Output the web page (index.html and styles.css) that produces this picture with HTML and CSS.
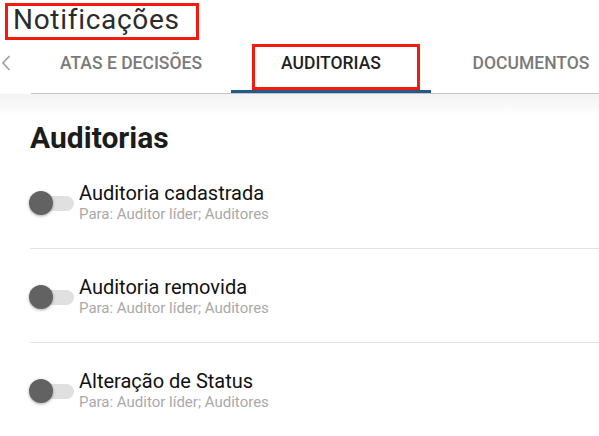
FILE: index.html
```html
<!DOCTYPE html>
<html lang="pt">
<head>
<meta charset="utf-8">
<link rel="stylesheet" href="styles.css">
</head>
<body>
<header class="header">
  <h1 class="title">Notificações</h1>
  <div class="mark mark-title"></div>
</header>
<nav class="tabs">
  <button class="tab-scroll" aria-label="Anterior">
    <svg width="10" height="16" viewBox="0 0 10 16"><path d="M8.5 1 L2 8 L8.5 15" fill="none" stroke="#9e9e9e" stroke-width="1.6"/></svg>
  </button>
  <div class="tab-list">
    <div class="tab">ATAS E DECISÕES</div>
    <div class="tab active">AUDITORIAS</div>
    <div class="tab">DOCUMENTOS</div>
  </div>
  <div class="mark mark-tab"></div>
</nav>
<main class="content">
  <h2 class="section-title">Auditorias</h2>
  <ul class="list">
    <li class="item">
      <span class="toggle"><span class="track"></span><span class="thumb"></span></span>
      <div class="item-text">
        <div class="item-title">Auditoria cadastrada</div>
        <div class="item-sub">Para: Auditor líder; Auditores</div>
      </div>
    </li>
    <li class="item">
      <span class="toggle"><span class="track"></span><span class="thumb"></span></span>
      <div class="item-text">
        <div class="item-title">Auditoria removida</div>
        <div class="item-sub">Para: Auditor líder; Auditores</div>
      </div>
    </li>
    <li class="item">
      <span class="toggle"><span class="track"></span><span class="thumb"></span></span>
      <div class="item-text">
        <div class="item-title">Alteração de Status</div>
        <div class="item-sub">Para: Auditor líder; Auditores</div>
      </div>
    </li>
  </ul>
</main>
</body>
</html>
```

FILE: styles.css
```css
* { box-sizing: border-box; }
html, body { margin: 0; padding: 0; background: #fff; }
body {
  font-family: Roboto, "Noto Sans", Arial, sans-serif;
  color: #212121;
  width: 599px;
  height: 436px;
  overflow: hidden;
}
.header {
  position: relative;
  height: 40px;
  padding: 3px 0 0 13px;
}
.title {
  margin: 0;
  font-size: 28px;
  letter-spacing: 0.7px;
  font-weight: 400;
  line-height: 34px;
  color: #2b2b2b;
}
.mark {
  position: absolute;
  border: 3px solid #f41a0d;
  pointer-events: none;
}
.mark-title { left: 5px; top: 3px; width: 194px; height: 37px; }
.tabs {
  position: relative;
  display: flex;
  height: 54px;
  background: #fff;
}
.tab-scroll {
  width: 31px;
  border: 0;
  background: transparent;
  padding: 0 0 12px 0;
  display: flex;
  align-items: center;
  justify-content: flex-start;
}
.tab-scroll svg { margin-left: 1px; margin-top: 3px; }
.tab-list {
  display: flex;
  flex: 1;
  border-bottom: 1px solid #c4c4c4;
  overflow: hidden;
}
.tab {
  flex: 0 0 200px;
  text-align: center;
  font-size: 17.5px;
  font-weight: 500;
  color: #7a7a7a;
  padding-top: 13px;
  height: 53px;
  border-bottom: 3px solid transparent;
  white-space: nowrap;
}
.tab.active {
  color: #1f1f1f;
  border-bottom-color: #255a84;
  margin-bottom: -1px;
}
.mark-tab { left: 252px; top: 4px; width: 168px; height: 46px; }
.content {
  padding: 26px 0 0 30px;
  background: linear-gradient(#f3f3f3, #fff 22px);
}
.section-title {
  margin: 0;
  font-size: 30px;
  font-weight: 700;
  line-height: 35px;
  color: #1c1c1c;
}
.list { list-style: none; margin: 0; padding: 0; }
.item {
  display: flex;
  align-items: center;
  height: 94px;
  border-bottom: 1px solid #e2e2e2;
}
.toggle {
  position: relative;
  width: 44px;
  height: 24px;
  margin: 3px 5px 0 0;
  flex: 0 0 auto;
}
.track {
  position: absolute;
  left: 10px;
  top: 5px;
  width: 34px;
  height: 15px;
  border-radius: 8px;
  background: #e0e0e0;
}
.thumb {
  position: absolute;
  left: -1px;
  top: 0;
  width: 24px;
  height: 24px;
  border-radius: 50%;
  background: #626262;
  box-shadow: 0 1px 3px rgba(0,0,0,0.35);
}
.item-text { display: flex; flex-direction: column; }
.item-title {
  font-size: 20px;
  line-height: 24px;
  color: #111;
}
.item-sub {
  font-size: 15px;
  line-height: 18px;
  color: #a9a9a9;
}
```
